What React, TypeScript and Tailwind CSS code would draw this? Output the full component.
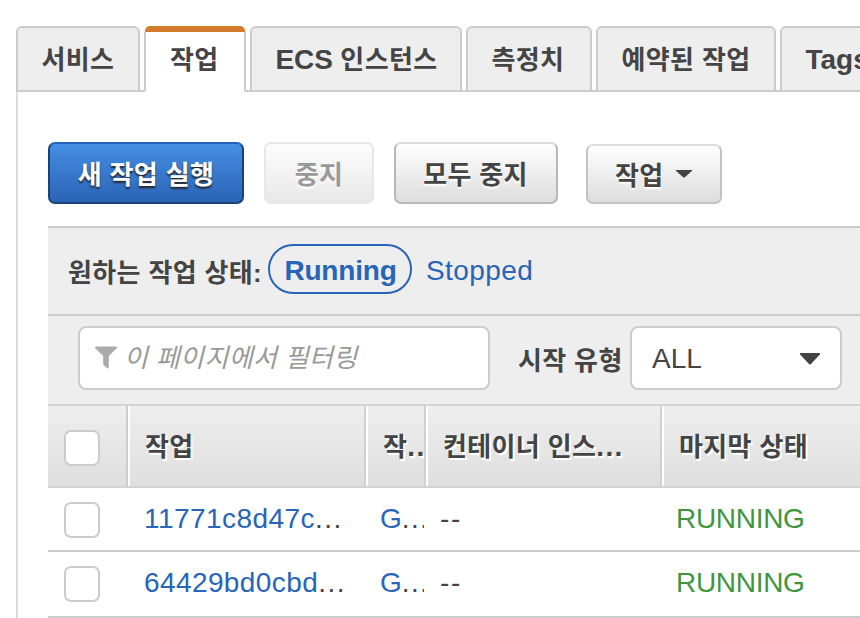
import type { ReactNode } from "react";

const tabs = [
  { label: "서비스", width: "w-[124px]" },
  { label: "작업", width: "w-[102px]", active: true },
  { label: "ECS 인스턴스", width: "w-[212px]" },
  { label: "측정치", width: "w-[126px]" },
  { label: "예약된 작업", width: "w-[180px]" },
  { label: "Tags", width: "w-[130px]" },
];

const tasks = [
  { id: "11771c8d47c", definition: "G", instance: "--", status: "RUNNING", height: "h-[64px]", spacing: "tracking-[0.45px]" },
  { id: "64429bd0cbd", definition: "G", instance: "--", status: "RUNNING", height: "h-[66px]", spacing: "tracking-[0.4px]" },
];

function Ko({ children, className = "" }: { children: ReactNode; className?: string }) {
  return <span className={`text-[26px] font-bold tracking-[0.35px] whitespace-nowrap ${className}`}>{children}</span>;
}

function Caret({ className }: { className: string }) {
  return (
    <svg viewBox="0 0 20 12" preserveAspectRatio="none" className={className} fill="#444">
      <path d="M.6 0h18.8a.6.6 0 0 1 .5 1.4L11 11a1.4 1.4 0 0 1-2 0L.1 1.4A.6.6 0 0 1 .6 0Z" />
    </svg>
  );
}

function Tab({ label, width, active }: { label: string; width: string; active?: boolean }) {
  if (active) {
    return (
      <div className={`flex h-[66px] shrink-0 flex-col rounded-t-[6px] ${width}`}>
        <div className="mx-px h-[6px] shrink-0 rounded-t-[5px] bg-[#d27b2c]" />
        <div className="flex grow justify-start rounded-b-[2px] border-x-2 border-[#ccc] pt-[6px] pl-6">
          <Ko className="leading-[44px]">{label}</Ko>
        </div>
      </div>
    );
  }
  return (
    <div className={`flex h-[66px] shrink-0 justify-start rounded-t-[6px] border-2 border-[#ccc] bg-[#eee] pt-[10px] pl-[23.5px] ${width}`}>
      <Ko className="leading-[44px]">
        {label.startsWith("ECS") ? (
          <>
            <span className="text-[28px] tracking-[-0.1px]">ECS</span> {label.slice(4)}
          </>
        ) : label === "Tags" ? (
          <span className="text-[28px] tracking-normal">{label}</span>
        ) : (
          label
        )}
      </Ko>
    </div>
  );
}

function Checkbox() {
  return <div className="size-9 rounded-[7px] border-2 border-[#ccc] bg-white" />;
}

function HeaderCell({ width, text, dots }: { width: string; text: string; dots?: boolean }) {
  return (
    <div className={`h-full shrink-0 overflow-hidden border-r-2 border-l-2 border-r-[#d0d0d0] border-l-white pl-[15px] ${width}`}>
      <Ko className="leading-[82px] [text-shadow:1px_2px_0_#fff,2px_2px_0_#fff]">
        {text}
        {dots && <span className="text-[28px] tracking-[1.4px]">...</span>}
      </Ko>
    </div>
  );
}

export default function App() {
  return (
    <div className="h-[618px] w-[860px] overflow-hidden bg-white pt-[26px] pl-4 font-['Liberation_Sans','Noto_Sans_CJK_KR',sans-serif] text-[28px] text-[#444]">
      <div className="flex">
        {tabs.map((tab, i) => (
          <div key={tab.label} className="flex shrink-0 items-end">
            {i > 0 && <div className="w-1 border-b-2 border-[#ccc]" />}
            <Tab {...tab} />
          </div>
        ))}
      </div>

      <div className="h-[526px] border-l-2 border-[#ddd] pl-[30px]">
        <div className="flex h-[134px] items-end pb-[22px]">
          <button className="flex h-[62px] w-[196px] items-center justify-center rounded-[7px] border-2 border-[#1a4278] border-t-[#2463b5] bg-linear-to-b from-[#468ee5] to-[#2a64b5] pt-[3px] text-white">
            <Ko className="leading-[44px] [text-shadow:0_2px_2px_#222]">새 작업 실행</Ko>
          </button>
          <button className="ml-5 flex h-[62px] w-[110px] items-center justify-center rounded-[7px] border-2 border-[#e7e7e7] bg-linear-to-b from-[#fdfdfd] to-[#e8e8e8] pt-[3px] text-[#999]">
            <Ko className="leading-[44px] [text-shadow:0_2px_2px_#fff]">중지</Ko>
          </button>
          <button className="ml-5 flex h-[62px] w-[164px] items-center justify-center rounded-[7px] border-2 border-[#b8b8b8] border-t-[#dcdcdc] bg-linear-to-b from-white to-[#ddd] pt-[3px] pr-px">
            <Ko className="leading-[44px] [text-shadow:0_2px_2px_#fff]">모두 중지</Ko>
          </button>
          <button className="ml-7 flex h-[60px] w-[136px] items-center rounded-[7px] border-2 border-[#c2c2c2] border-t-[#dcdcdc] bg-linear-to-b from-white to-[#ddd] pt-[3px] pl-[27px]">
            <Ko className="leading-[44px] [text-shadow:0_2px_2px_#fff]">작업</Ko>
            <Caret className="mb-1 ml-3 h-2 w-4" />
          </button>
        </div>

        <div className="flex h-[88px] border-t-2 border-[#ccc] bg-[#eee] pl-5">
          <Ko className="mt-[23px] w-[200px] leading-[44px]">원하는 작업 상태:</Ko>
          <div className="mt-4 h-[50px] w-[144px] rounded-full border-2 border-[#2864b7] pl-px text-center leading-[49px] font-bold tracking-[-0.2px] text-[#2864b7]">
            Running
          </div>
          <span className="mt-[22px] ml-[14px] leading-[42px] tracking-[0.4px] text-[#2864b7]">Stopped</span>
        </div>

        <div className="flex h-[90px] border-t-2 border-[#ccc] bg-[#eee] pt-[10px] pl-[30px]">
          <div className="flex h-16 w-[412px] shrink-0 items-center rounded-[8px] border-2 border-[#ccc] bg-white pl-[15px]">
            <svg viewBox="0 0 23 23" className="mb-0.5 h-[23px] w-[22px]" fill="#aaa">
              <path d="M1 0h21a1 1 0 0 1 .7 1.7L14.4 10v12a1 1 0 0 1-1.6.7L9 19.3a1 1 0 0 1-.4-.8V10L.3 1.7A1 1 0 0 1 1 0Z" />
            </svg>
            <span className="ml-[7px] text-[26px] leading-[44px] tracking-[0.35px] whitespace-nowrap text-[#999] italic">이 페이지에서 필터링</span>
          </div>
          <Ko className="mt-[13px] ml-7 w-[112px] shrink-0 leading-[44px]">시작 유형</Ko>
          <div className="flex h-16 w-[212px] shrink-0 items-center justify-between rounded-[8px] border-2 border-[#ccc] bg-white pt-[2px] pr-5 pl-5">
            <span className="leading-[58px]">ALL</span>
            <Caret className="h-3 w-5" />
          </div>
        </div>

        <div className="flex h-[84px] border-y-2 border-[#d3d3d3] bg-linear-to-b from-[#eee] to-[#dfdfdf]">
          <div className="flex h-full w-[80px] shrink-0 items-center border-r-2 border-[#ccc] pt-1 pl-4">
            <Checkbox />
          </div>
          <HeaderCell width="w-[238px]" text="작업" />
          <HeaderCell width="w-[60px]" text="작" dots />
          <HeaderCell width="w-[236px]" text="컨테이너 인스" dots />
          <HeaderCell width="w-[240px]" text="마지막 상태" />
        </div>

        {tasks.map((task) => (
          <div key={task.id} className={`flex border-b-2 border-[#ccc] leading-[62px] whitespace-nowrap ${task.height}`}>
            <div className="w-[96px] shrink-0 pt-[14px] pl-4">
              <Checkbox />
            </div>
            <div className="w-[236px] shrink-0">
              <span className={`text-[#2864b7] ${task.spacing}`}>{task.id}</span>
              <span className="tracking-[1.5px]">...</span>
            </div>
            <div className="w-[44px] shrink-0 overflow-hidden">
              <span className="text-[#2864b7]">{task.definition}</span>
              <span className="tracking-[1.5px]">...</span>
            </div>
            <div className="w-[252px] shrink-0 pl-4 tracking-[1.8px]">{task.instance}</div>
            <div className="tracking-[-0.3px] text-[#3f963f]">{task.status}</div>
          </div>
        ))}
      </div>
    </div>
  );
}
